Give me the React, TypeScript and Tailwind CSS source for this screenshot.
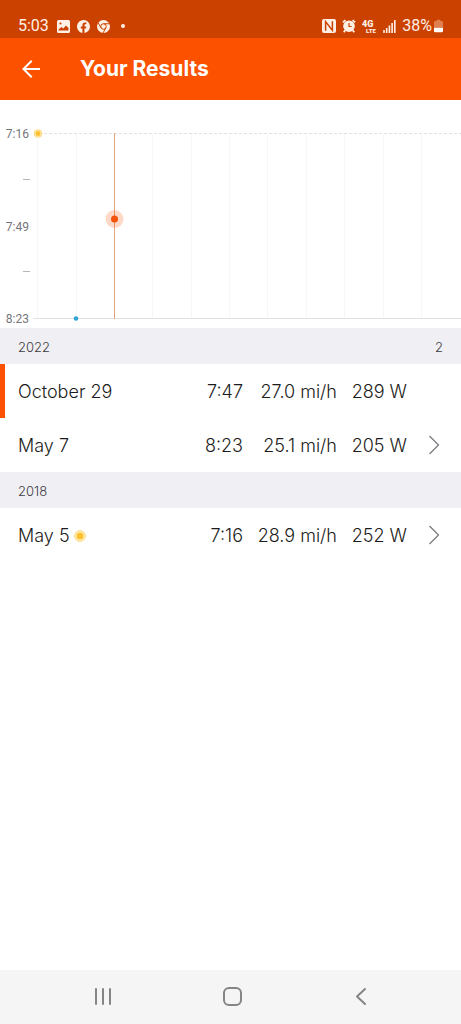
import { Fragment } from "react";

type Result = {
  date: string;
  time: string;
  speed: string;
  power: string;
  best?: boolean;
  current?: boolean;
};

const years: { year: string; count?: number; results: Result[] }[] = [
  {
    year: "2022",
    count: 2,
    results: [
      { date: "October 29", time: "7:47", speed: "27.0 mi/h", power: "289 W", current: true },
      { date: "May 7", time: "8:23", speed: "25.1 mi/h", power: "205 W" },
    ],
  },
  {
    year: "2018",
    results: [{ date: "May 5", time: "7:16", speed: "28.9 mi/h", power: "252 W", best: true }],
  },
];

const gridLines = [38, 77, 153, 192, 230, 268, 307, 345, 384, 422];

const StatusBar = () => (
  <div className="flex h-[38px] items-end justify-between bg-[#cb4100] pr-[18px] pb-0.5 pl-[18px] font-['Roboto',sans-serif] text-base text-[#fff0e6]">
    <div className="flex h-5 items-center">
      <span className="w-[39px]">5:03</span>
      <svg className="h-[13px] w-[13px]" viewBox="0 0 13 13" aria-hidden="true">
        <path
          fill="currentColor"
          fillRule="evenodd"
          d="M1.5 0h10A1.5 1.5 0 0 1 13 1.5v10a1.5 1.5 0 0 1-1.5 1.5h-10A1.5 1.5 0 0 1 0 11.5v-10A1.5 1.5 0 0 1 1.5 0zM1.5 10.5h10V8L9 5.5 6.3 8.4 4.4 6.9 1.5 9.5zM3.5 2.4a1.1 1.1 0 1 0 0 2.2 1.1 1.1 0 0 0 0-2.2z"
        />
      </svg>
      <svg className="ml-[7px] h-[13px] w-[13px]" viewBox="0 0 24 24" aria-hidden="true">
        <path
          fill="currentColor"
          d="M24 12a12 12 0 1 0-14 11.9v-8.4H7V12h3V9.4c0-3 1.8-4.7 4.6-4.7 1.3 0 2.7.2 2.7.2v3h-1.6c-1.5 0-1.9.9-1.9 1.9V12h3.3l-.5 3.5h-2.8v8.4A12 12 0 0 0 24 12z"
        />
      </svg>
      <svg className="ml-[7px] h-[13px] w-[13px]" viewBox="0 0 26 26" aria-hidden="true">
        <circle cx="13" cy="13" r="13" fill="currentColor" />
        <g fill="none" stroke="#cb4100" strokeWidth="2">
          <circle cx="13" cy="13" r="5.5" />
          <path d="M13 7.5h12M8.2 15.8 2.2 5.6M17.8 15.8 12 26" />
        </g>
      </svg>
      <span className="ml-[11px] h-1 w-1 rounded-full bg-current" />
    </div>
    <div className="flex h-5 items-center">
      <svg className="h-[14px] w-[14px]" viewBox="0 0 14 14" aria-hidden="true">
        <rect width="14" height="14" rx="2" fill="currentColor" />
        <path d="M3.6 11.8V2.6l6.8 8.8V2.2" fill="none" stroke="#cb4100" strokeWidth="1.5" />
      </svg>
      <svg className="ml-[6px] h-[14px] w-[14px]" viewBox="0 0 14 14" aria-hidden="true">
        <circle cx="7" cy="7.2" r="5.8" fill="currentColor" />
        <path
          d="M.9 3.4 3.4 1.1M13.1 3.4l-2.5-2.3M3.2 11.2l-1.4 2M10.8 11.2l1.4 2"
          stroke="currentColor"
          strokeWidth="1.8"
        />
        <path d="M7 4v3.5h2.6" fill="none" stroke="#cb4100" strokeWidth="1.2" />
      </svg>
      <svg className="ml-[5px] h-[14px] w-4" viewBox="0 0 16 14" role="img" aria-label="4G LTE">
        <g fill="currentColor" fontFamily="Roboto, sans-serif" fontWeight="900">
          <text x="1" y="8" fontSize="9">4G</text>
          <text x="5" y="14" fontSize="6">LTE</text>
        </g>
      </svg>
      <svg className="ml-[6px] h-[13px] w-[13px]" viewBox="0 0 13 13" aria-hidden="true">
        <path
          d="M1 10v3M3.7 8v5M6.4 5.5V13M9.1 3v10M11.8 0v13"
          stroke="currentColor"
          strokeWidth="1.6"
        />
      </svg>
      <span className="ml-[6px]">38%</span>
      <svg className="ml-[2px] h-[14px] w-[9px]" viewBox="0 0 10 14" aria-hidden="true">
        <path d="M3 0h4v1.5h1.5A1.5 1.5 0 0 1 10 3v6H0V3a1.5 1.5 0 0 1 1.5-1.5H3z" fill="#e08050" />
        <path d="M0 9h10v3.5A1.5 1.5 0 0 1 8.5 14h-7A1.5 1.5 0 0 1 0 12.5z" fill="#fff" />
      </svg>
    </div>
  </div>
);

const BestMark = () => (
  <svg className="h-3 w-3" viewBox="0 0 12 12" role="img" aria-label="Best result">
    <circle cx="6" cy="6" r="5.3" fill="#fff3cd" stroke="#fbcf55" strokeWidth="0.9" />
    <circle cx="6" cy="6" r="3.5" fill="#fdc02f" />
  </svg>
);

const ResultsChart = () => (
  <svg className="block h-[228px] w-full" role="img" aria-label="Times by attempt">
    {gridLines.map((x) => (
      <line key={x} x1={x - 0.5} x2={x - 0.5} y1="34" y2="218" stroke="#f7f7f7" />
    ))}
    <line x1="44" x2="100%" y1="33.5" y2="33.5" stroke="#e0e0e0" strokeDasharray="3 2" />
    <line x1="33" x2="100%" y1="218.5" y2="218.5" stroke="#e2e2e2" />
    <path d="M23 79.5h7M23 171.5h7" stroke="#b5b5b5" />
    <g fill="#75757a" fontFamily="Roboto, sans-serif" fontSize="12" textAnchor="end">
      <text x="29" y="38">7:16</text>
      <text x="29" y="131">7:49</text>
      <text x="29" y="223">8:23</text>
    </g>
    <circle cx="38" cy="33.5" r="3.8" fill="#fff3cd" stroke="#fbd66c" />
    <circle cx="38" cy="33.5" r="2.5" fill="#fdc02f" />
    <circle cx="76" cy="218.5" r="2.3" fill="#2fa5d8" />
    <line x1="114.5" x2="114.5" y1="33" y2="219" stroke="#e0a583" />
    <circle cx="114.5" cy="119" r="9" fill="#fc5200" fillOpacity="0.22" />
    <circle cx="114.5" cy="119" r="3.5" fill="#f4510b" />
  </svg>
);

const ResultsTable = () => (
  <table className="w-full table-fixed text-lg font-light text-[#1c1c20]">
    <colgroup>
      <col />
      <col className="w-[64px]" />
      <col className="w-[94px]" />
      <col className="w-[70px]" />
      <col className="w-[54px]" />
    </colgroup>
    <tbody>
      {years.map(({ year, count, results }) => (
        <Fragment key={year}>
          <tr className="h-9 bg-[#f0eff4] text-[13px] text-[#3c3c42]">
            <th colSpan={4} scope="rowgroup" className="pt-0.5 pl-[18px] text-left font-light">
              {year}
            </th>
            <td className="pt-0.5 pr-[18px] text-right">{count}</td>
          </tr>
          {results.map((r) => (
            <tr key={r.date} className="h-[54px]">
              <th
                scope="row"
                className={`pt-0.5 pl-[18px] text-left font-light ${r.current ? "shadow-[inset_5px_0_0_#fc5200]" : ""}`}
              >
                <span className="flex items-center gap-1">
                  {r.date}
                  {r.best && <BestMark />}
                </span>
              </th>
              <td className="pt-0.5 text-right">{r.time}</td>
              <td className="pt-0.5 text-right whitespace-nowrap">{r.speed}</td>
              <td className="pt-0.5 text-right whitespace-nowrap">{r.power}</td>
              <td>
                {!r.current && (
                  <button type="button" aria-label={`Open ${r.date}`} className="ml-[21px] block">
                    <svg className="h-5 w-3" viewBox="0 0 12 20" fill="none" stroke="#77777c" strokeWidth="1.2">
                      <path d="M1.5 1 10.5 10 1.5 19" />
                    </svg>
                  </button>
                )}
              </td>
            </tr>
          ))}
        </Fragment>
      ))}
    </tbody>
  </table>
);

const NavBar = () => (
  <nav className="mt-auto flex h-[54px] items-center justify-around bg-[#f5f5f5] pr-9 pl-[38px] text-[#858585]">
    <button type="button" aria-label="Recent apps">
      <svg className="h-5 w-5" viewBox="0 0 20 20" stroke="currentColor" strokeWidth="2" strokeLinecap="round">
        <path d="M3 2v15M10 2v15M17 2v15" />
      </svg>
    </button>
    <button type="button" aria-label="Home">
      <svg className="h-5 w-5" viewBox="0 0 20 20" fill="none" stroke="currentColor" strokeWidth="2">
        <rect x="2" y="1" width="17" height="17" rx="5" />
      </svg>
    </button>
    <button type="button" aria-label="Back">
      <svg
        className="h-5 w-5"
        viewBox="0 0 20 20"
        fill="none"
        stroke="currentColor"
        strokeWidth="2"
        strokeLinecap="round"
        strokeLinejoin="round"
      >
        <path d="M14 2 6 9.5 14 17" />
      </svg>
    </button>
  </nav>
);

const App = () => {
  return (
    <div className="flex min-h-screen flex-col bg-white font-['Inter',sans-serif]">
      <StatusBar />
      <header className="flex h-[62px] items-center bg-[#fc5200] pl-[22px] text-white">
        <button type="button" aria-label="Back">
          <svg
            className="h-[18px] w-[18px]"
            viewBox="0 0 18 18"
            fill="none"
            stroke="currentColor"
            strokeWidth="2"
            strokeLinecap="square"
          >
            <path d="M2 9h15M9 1.5 1.5 9 9 16.5" />
          </svg>
        </button>
        <h1 className="ml-10 text-[21px] font-bold">Your Results</h1>
      </header>
      <main>
        <ResultsChart />
        <ResultsTable />
      </main>
      <NavBar />
    </div>
  );
};

export default App;
